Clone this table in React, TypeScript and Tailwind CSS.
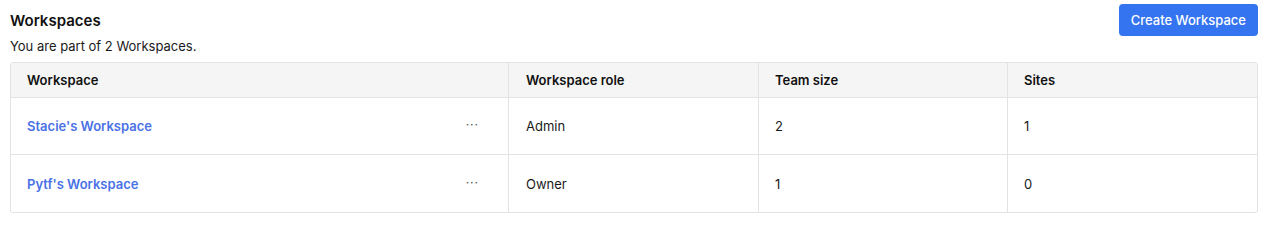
const rows = [
  { name: "Stacie's Workspace", role: "Admin", team: "2", sites: "1" },
  { name: "Pytf's Workspace", role: "Owner", team: "1", sites: "0" },
];

export default function App() {
  return (
    <div className="px-[10px] pt-[4px] font-['Inter',sans-serif] text-[#1a1a1a] bg-white min-h-[241px]">
      <div className="flex justify-between items-start">
        <div>
          <h1 className="text-[15px] font-semibold leading-[20px] mt-[7px] text-[#111]">Workspaces</h1>
          <p className="text-[13px] leading-[18px] mt-[6px] text-[#1a1a1a]">You are part of 2 Workspaces.</p>
        </div>
        <button className="mr-[9px] h-[32px] pt-[1px] px-[12px] rounded-[4px] bg-[#3574f0] text-white text-[13px] font-medium">
          Create Workspace
        </button>
      </div>
      <div className="mt-[7px] border border-[#e3e3e3] rounded-[3px] overflow-hidden w-[1248px]">
        <div className="grid grid-cols-[497px_250px_249px_1fr] bg-[#f5f5f5] h-[35px] items-stretch border-b border-[#e3e3e3]">
          <div className="px-[16px] pt-[2px] flex items-center text-[13px] font-semibold text-[#111]">Workspace</div>
          <div className="px-[17px] pt-[2px] flex items-center text-[13px] font-semibold text-[#111] border-l border-[#e3e3e3]">Workspace role</div>
          <div className="px-[16px] pt-[2px] flex items-center text-[13px] font-semibold text-[#111] border-l border-[#e3e3e3]">Team size</div>
          <div className="px-[16px] pt-[2px] flex items-center text-[13px] font-semibold text-[#111] border-l border-[#e3e3e3]">Sites</div>
        </div>
        {rows.map((r, i) => (
          <div
            key={r.name}
            className={`grid grid-cols-[497px_250px_249px_1fr] h-[57px] ${i === 0 ? "border-b border-[#e3e3e3]" : ""}`}
          >
            <div className="pl-[16px] pr-[29px] pt-[2px] flex items-center justify-between text-[13px]">
              <a className="text-[#4a72e6] font-semibold">{r.name}</a>
              <span className="text-[#555] tracking-[1px] text-[12px] -mt-[4px]">···</span>
            </div>
            <div className="px-[17px] pt-[2px] flex items-center text-[13px] border-l border-[#e3e3e3]">{r.role}</div>
            <div className="px-[16px] pt-[2px] flex items-center text-[13px] border-l border-[#e3e3e3]">{r.team}</div>
            <div className="px-[16px] pt-[2px] flex items-center text-[13px] border-l border-[#e3e3e3]">{r.sites}</div>
          </div>
        ))}
      </div>
    </div>
  );
}
